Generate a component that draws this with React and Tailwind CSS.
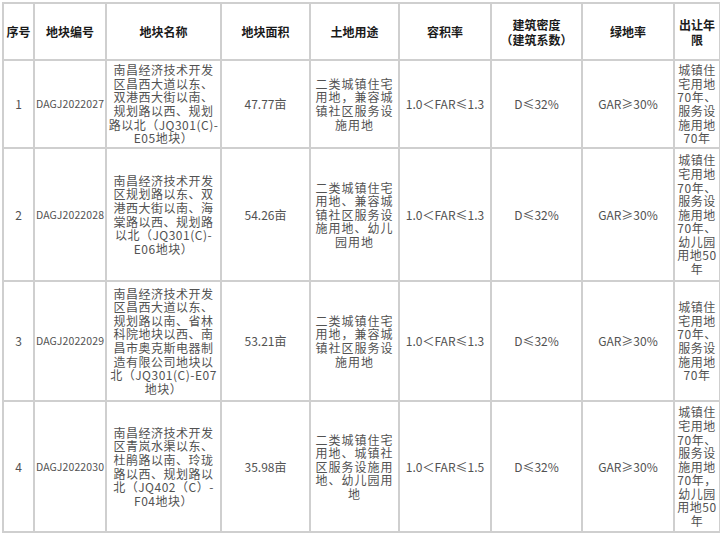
import React from 'react'

const cols = [31, 72, 115, 89, 89, 92, 91, 92, 46]

const head = [
  ['序号'],
  ['地块编号'],
  ['地块名称'],
  ['地块面积'],
  ['土地用途'],
  ['容积率'],
  ['建筑密度', '（建筑系数）'],
  ['绿地率'],
  ['出让年', '限'],
]

const rows = [
  {
    h: 88,
    no: '1',
    code: 'DAGJ2022027',
    name: ['南昌经济技术开发', '区昌西大道以东、', '双港西大街以南、', '规划路以西、规划', '路以北（JQ301(C)-', 'E05地块）'],
    area: '47.77亩',
    use: ['二类城镇住宅', '用地，兼容城', '镇社区服务设', '施用地'],
    far: '1.0＜FAR≤1.3',
    term: ['城镇住', '宅用地', '70年、', '服务设', '施用地', '70年'],
  },
  {
    h: 133,
    no: '2',
    code: 'DAGJ2022028',
    name: ['南昌经济技术开发', '区规划路以东、双', '港西大街以南、海', '棠路以西、规划路', '以北（JQ301(C)-', 'E06地块）'],
    area: '54.26亩',
    use: ['二类城镇住宅', '用地、兼容城', '镇社区服务设', '施用地、幼儿', '园用地'],
    far: '1.0＜FAR≤1.3',
    term: ['城镇住', '宅用地', '70年、', '服务设', '施用地', '70年、', '幼儿园', '用地50', '年'],
  },
  {
    h: 120,
    no: '3',
    code: 'DAGJ2022029',
    name: ['南昌经济技术开发', '区昌西大道以东、', '规划路以南、省林', '科院地块以西、南', '昌市奥克斯电器制', '造有限公司地块以', '北（JQ301(C)-E07', '地块）'],
    area: '53.21亩',
    use: ['二类城镇住宅', '用地，兼容城', '镇社区服务设', '施用地'],
    far: '1.0＜FAR≤1.3',
    term: ['城镇住', '宅用地', '70年、', '服务设', '施用地', '70年'],
  },
  {
    h: 131,
    no: '4',
    code: 'DAGJ2022030',
    name: ['南昌经济技术开发', '区青岚水渠以东、', '杜鹃路以南、玲珑', '路以西、规划路以', '北（JQ402（C）-', 'F04地块）'],
    area: '35.98亩',
    use: ['二类城镇住宅', '用地、城镇社', '区服务设施用', '地、幼儿园用', '地'],
    far: '1.0＜FAR≤1.5',
    term: ['城镇住', '宅用地', '70年、', '服务设', '施用地', '70年，', '幼儿园', '用地50', '年'],
  },
]

const Lines = ({ lines }) => (
  <>
    {lines.map((l, i) => (
      <div key={i} className="whitespace-nowrap">{l}</div>
    ))}
  </>
)

const cell = 'border-2 border-[#cfcfcf] text-center align-middle p-0 overflow-hidden'

const App = () => {
  return (
    <div
      className="w-[720px] h-[533px] overflow-hidden bg-white pt-[2px] pl-[2px]"
      style={{ fontFamily: '"Noto Sans CJK SC", "Liberation Sans", sans-serif' }}
    >
      <table className="table-fixed border-collapse w-[718px]">
        <colgroup>
          {cols.map((w, i) => (
            <col key={i} style={{ width: w }} />
          ))}
        </colgroup>
        <thead>
          <tr className="h-[57px]">
            {head.map((h, i) => (
              <th key={i} className={`${cell} text-[12px] leading-[15px] font-bold text-[#1a1a1a]`}>
                <Lines lines={h} />
              </th>
            ))}
          </tr>
        </thead>
        <tbody className="text-[12px] leading-[13.6px] text-[#525252]">
          {rows.map((r) => (
            <tr key={r.no} style={{ height: r.h }}>
              <td className={cell}>{r.no}</td>
              <td className={`${cell} whitespace-nowrap text-[10.5px] tracking-[0.1px]`}>{r.code}</td>
              <td className={`${cell} tracking-[0.5px]`}>
                <Lines lines={r.name} />
              </td>
              <td className={`${cell} whitespace-nowrap`}>{r.area}</td>
              <td className={`${cell} tracking-[1px]`}>
                <Lines lines={r.use} />
              </td>
              <td className={`${cell} whitespace-nowrap`}>{r.far}</td>
              <td className={`${cell} whitespace-nowrap`}>D≤32%</td>
              <td className={`${cell} whitespace-nowrap`}>GAR≥30%</td>
              <td className={`${cell} tracking-[0.5px]`}>
                <Lines lines={r.term} />
              </td>
            </tr>
          ))}
        </tbody>
      </table>
    </div>
  )
}

export default App
